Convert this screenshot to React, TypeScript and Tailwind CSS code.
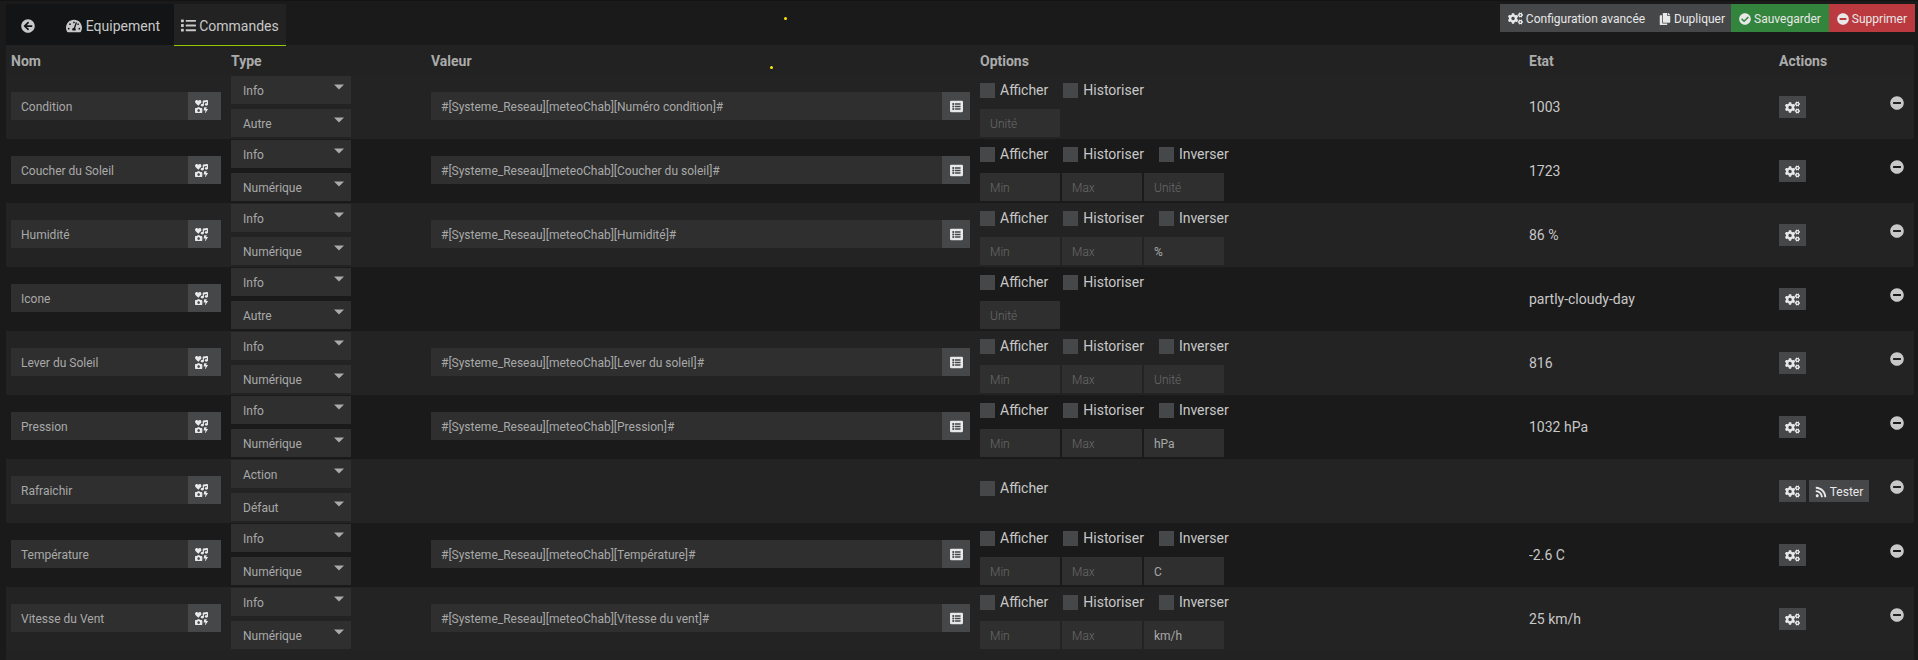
import React from 'react';
import {
  FaArrowCircleLeft,
  FaCheckCircle,
  FaCogs,
  FaCopy,
  FaIcons,
  FaList,
  FaListAlt,
  FaMinusCircle,
  FaRss,
  FaTachometerAlt,
} from 'react-icons/fa';

type Commande = {
  nom: string;
  type: 'Info' | 'Action';
  sousType: string;
  valeur?: string;
  unite?: string;
  etat?: string;
};

const commandes: Commande[] = [
  { nom: 'Condition', type: 'Info', sousType: 'Autre', valeur: '#[Systeme_Reseau][meteoChab][Numéro condition]#', etat: '1003' },
  { nom: 'Coucher du Soleil', type: 'Info', sousType: 'Numérique', valeur: '#[Systeme_Reseau][meteoChab][Coucher du soleil]#', etat: '1723' },
  { nom: 'Humidité', type: 'Info', sousType: 'Numérique', valeur: '#[Systeme_Reseau][meteoChab][Humidité]#', unite: '%', etat: '86 %' },
  { nom: 'Icone', type: 'Info', sousType: 'Autre', etat: 'partly-cloudy-day' },
  { nom: 'Lever du Soleil', type: 'Info', sousType: 'Numérique', valeur: '#[Systeme_Reseau][meteoChab][Lever du soleil]#', etat: '816' },
  { nom: 'Pression', type: 'Info', sousType: 'Numérique', valeur: '#[Systeme_Reseau][meteoChab][Pression]#', unite: 'hPa', etat: '1032 hPa' },
  { nom: 'Rafraichir', type: 'Action', sousType: 'Défaut' },
  { nom: 'Température', type: 'Info', sousType: 'Numérique', valeur: '#[Systeme_Reseau][meteoChab][Température]#', unite: 'C', etat: '-2.6 C' },
  { nom: 'Vitesse du Vent', type: 'Info', sousType: 'Numérique', valeur: '#[Systeme_Reseau][meteoChab][Vitesse du vent]#', unite: 'km/h', etat: '25 km/h' },
];

const sousTypes = {
  Info: ['Numérique', 'Binaire', 'Autre'],
  Action: ['Défaut', 'Curseur', 'Message', 'Couleur', 'Liste'],
};

const inputClass =
  'h-7 min-w-0 bg-[#2f2f2f] px-[10px] pt-[2px] text-xs text-[#a9a9a9] outline-none placeholder:font-light placeholder:text-[#6a6a6a]';

const Select: React.FC<{ label: string; value: string; options: string[] }> = ({ label, value, options }) => (
  <div className="relative w-[120px]">
    <select
      aria-label={label}
      defaultValue={value}
      className="block h-7 w-full appearance-none bg-[#2f2f2f] px-3 pt-[2px] text-xs text-[#a9a9a9] outline-none"
    >
      {options.map((option) => (
        <option key={option}>{option}</option>
      ))}
    </select>
    <svg className="pointer-events-none absolute top-2 right-[7px]" width="10" height="6" viewBox="0 0 10 6" fill="#ababab">
      <path d="M0 0.5h10L5 5.5z" />
    </svg>
  </div>
);

const Checkbox: React.FC<{ label: string }> = ({ label }) => (
  <label className="flex items-center gap-[5px]">
    <input type="checkbox" className="size-[15px] appearance-none bg-[#464749] checked:bg-[#94ca02]" />
    {label}
  </label>
);

const Row: React.FC<{ cmd: Commande }> = ({ cmd }) => {
  const isInfo = cmd.type === 'Info';
  const isNumeric = cmd.sousType === 'Numérique';

  return (
    <tr className="h-16 odd:bg-[#232323] even:bg-[#1a1a1a]">
      <td className="px-[5px] pb-[2px]">
        <div className="flex">
          <input aria-label="Nom" defaultValue={cmd.nom} className={`${inputClass} flex-1`} />
          <button aria-label="Choisir une icône" className="flex h-7 w-[33px] items-center justify-center bg-[#464749] pt-px pr-[6px] text-[#e8e8e8]">
            <FaIcons size={13} />
          </button>
        </div>
      </td>
      <td className="px-[5px] pt-px pb-[2px]">
        <div className="flex flex-col gap-[5px]">
          <Select label="Type" value={cmd.type} options={['Info', 'Action']} />
          <Select label="Sous-type" value={cmd.sousType} options={sousTypes[cmd.type]} />
        </div>
      </td>
      <td className="px-[5px] pb-[2px]">
        {cmd.valeur && (
          <div className="flex">
            <input aria-label="Valeur" defaultValue={cmd.valeur} className={`${inputClass} flex-1`} />
            <button aria-label="Choisir une commande" className="flex h-7 w-7 items-center justify-center bg-[#464749] pt-px text-[#e8e8e8]">
              <FaListAlt size={13} />
            </button>
          </div>
        )}
      </td>
      <td className={isInfo ? 'px-[5px] pt-px pb-[2px]' : 'px-[5px] pb-[6px]'}>
        <div className="flex flex-col gap-[5px]">
          <div className="flex h-7 items-center gap-[15px] text-[#c8c8c8]">
            <Checkbox label="Afficher" />
            {isInfo && <Checkbox label="Historiser" />}
            {isNumeric && <Checkbox label="Inverser" />}
          </div>
          {isInfo && (
            <div className="flex gap-[2px]">
              {isNumeric && <input aria-label="Min" placeholder="Min" className={`${inputClass} w-20`} />}
              {isNumeric && <input aria-label="Max" placeholder="Max" className={`${inputClass} w-20`} />}
              <input aria-label="Unité" placeholder="Unité" defaultValue={cmd.unite} className={`${inputClass} w-20`} />
            </div>
          )}
        </div>
      </td>
      <td className="px-[5px] text-[#c8c8c8]">{cmd.etat}</td>
      <td className="px-[5px]">
        <div className="flex h-[22px] items-start gap-[3px] pr-[5px] text-xs text-[#e8e8e8]">
          <button aria-label="Configurer" className="flex h-full w-[27px] items-center justify-center bg-[#464749]">
            <FaCogs size={15} />
          </button>
          {!isInfo && (
            <button className="flex h-full w-[60px] items-center justify-center gap-[3px] bg-[#464749] pt-px">
              <FaRss size={12} />
              Tester
            </button>
          )}
          <button aria-label="Supprimer la commande" className="ml-auto text-[#c8c8c8]">
            <FaMinusCircle size={14} />
          </button>
        </div>
      </td>
    </tr>
  );
};

const App: React.FC = () => {
  return (
    <div className="relative min-h-screen border-t border-[#131313] bg-[#1a1a1a] pt-[3px] pr-[3px] pl-[6px] font-['Roboto',sans-serif] text-sm">
      <header className="flex h-[41px] items-start justify-between">
        <nav className="flex h-[42px] text-[#c8c8c8]">
          <a href="#retour" aria-label="Retour" className="mb-px flex w-11 items-center justify-center bg-[#121416] pt-[2px]">
            <FaArrowCircleLeft size={14} />
          </a>
          <a href="#equipement" className="mb-px flex w-[124px] items-center justify-end gap-1 bg-[#121416] pt-[2px] pr-[14px]">
            <FaTachometerAlt size={16} />
            Equipement
          </a>
          <a href="#commandes" className="relative flex w-28 items-center justify-center gap-[3px] border-b border-[#94ca02] bg-[#222222] pt-[2px]">
            <FaList size={15} />
            Commandes
          </a>
        </nav>
        <div className="flex h-7 text-xs text-[#e8e8e8]">
          <button className="flex items-center gap-[3px] bg-[#464749] px-2 pt-px">
            <FaCogs size={15} />
            Configuration avancée
          </button>
          <button className="flex items-center gap-[3px] bg-[#464749] px-[6px] pt-px">
            <FaCopy size={12} />
            Dupliquer
          </button>
          <button className="flex items-center gap-[3px] bg-[#33843c] px-2 pt-px">
            <FaCheckCircle size={12} />
            Sauvegarder
          </button>
          <button className="flex items-center gap-[3px] bg-[#bb3a3f] px-2 pt-px">
            <FaMinusCircle size={12} />
            Supprimer
          </button>
        </div>
      </header>

      <main className="mr-px bg-[#222222] pb-[9px]">
        <table className="w-full table-fixed border-collapse">
          <thead>
            <tr className="h-[30px] text-left text-[#ababab]">
              <th className="w-[220px] px-[5px] pt-[2px] font-bold">Nom</th>
              <th className="w-[200px] px-[5px] pt-[2px] font-bold">Type</th>
              <th className="px-[5px] pt-[2px] font-bold">Valeur</th>
              <th className="px-[5px] pt-[2px] font-bold">Options</th>
              <th className="w-[250px] px-[5px] pt-[2px] font-bold">Etat</th>
              <th className="w-[140px] px-[5px] pt-[2px] font-bold">Actions</th>
            </tr>
          </thead>
          <tbody>
            {commandes.map((cmd) => (
              <Row key={cmd.nom} cmd={cmd} />
            ))}
          </tbody>
        </table>
      </main>

      {/* background sparkles */}
      <span className="absolute top-4 left-[784px] size-[3px] rounded-full bg-[#ffe600]" />
      <span className="absolute top-[65px] left-[770px] size-[3px] rounded-full bg-[#ffe600]" />
    </div>
  );
};

export default App;
